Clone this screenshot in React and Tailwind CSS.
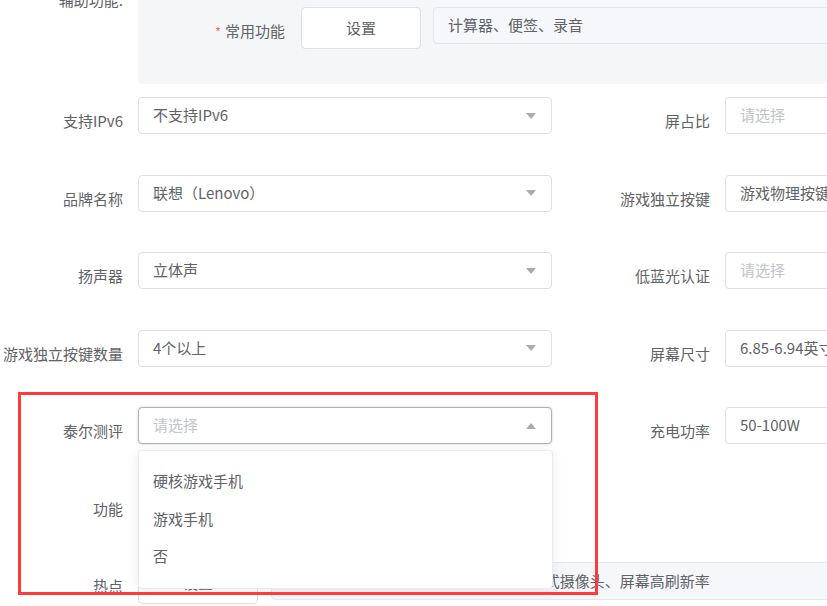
import React from 'react';

const FONT = { fontFamily: '"Noto Sans CJK SC", "Noto Sans", sans-serif' };

function Arrow({ up }) {
  return (
    <svg width="10" height="6" viewBox="0 0 10 6" className="flex-shrink-0">
      {up ? <polygon points="0,6 10,6 5,0" fill="#a8abb2" /> : <polygon points="0,0 10,0 5,6" fill="#a8abb2" />}
    </svg>
  );
}

function Select({ value, placeholder = '请选择', width = 'w-[414px]', open, arrow = true, children }) {
  return (
    <div className={`relative flex-shrink-0 ${width}`}>
      <div
        className={`h-[37px] rounded-[4px] border bg-white flex items-center justify-between pl-[14px] pr-[15px] ${
          open ? 'border-[#aab1bf] shadow-[0_0_3px_rgba(0,0,0,0.18)]' : 'border-[#dcdfe6]'
        }`}
      >
        <span className={`whitespace-nowrap ${value ? 'text-[#606266]' : 'text-[#c0c4cc]'}`}>{value || placeholder}</span>
        {arrow && <Arrow up={open} />}
      </div>
      {children}
    </div>
  );
}

function Label({ children }) {
  return (
    <div className="w-[138px] flex-shrink-0 pr-[15px] pt-[14px] leading-5 text-right whitespace-nowrap text-[#606266]">
      {children}
    </div>
  );
}

const ROWS = [
  { left: ['支持IPv6', '不支持IPv6'], right: ['屏占比', ''] },
  { left: ['品牌名称', '联想（Lenovo）'], right: ['游戏独立按键', '游戏物理按键'] },
  { left: ['扬声器', '立体声'], right: ['低蓝光认证', ''] },
  { left: ['游戏独立按键数量', '4个以上'], right: ['屏幕尺寸', '6.85-6.94英寸'] },
];

const OPTIONS = ['硬核游戏手机', '游戏手机', '否'];

export default function App() {
  return (
    <div className="relative w-[827px] h-[606px] overflow-hidden bg-white text-[15px]" style={FONT}>
      {/* 辅助功能 panel */}
      <div className="flex h-[84px]">
        <div className="w-[138px] flex-shrink-0 pr-[15px] text-right text-[#606266] leading-[22px] -mt-[11px]">辅助功能:</div>
        <div className="flex-1 bg-[#f5f6f8] rounded-b-[4px] flex items-start pt-[7px] overflow-hidden">
          <div className="w-[163px] flex-shrink-0 pr-[16px] pt-[13px] leading-[22px] text-right text-[#606266] whitespace-nowrap">
            <span className="text-[#f56c6c] mr-[4px] text-[13px]">*</span>常用功能
          </div>
          <div className="w-[120px] h-[42px] flex-shrink-0 bg-white border border-[#dcdfe6] rounded-[4px] flex items-center justify-center text-[#606266]">
            设置
          </div>
          <div className="ml-[12px] w-[420px] flex-shrink-0 h-[37px] bg-[#f5f7fa] border border-[#e4e7ed] rounded-[4px] flex items-center px-[14px] text-[#606266] whitespace-nowrap">
            计算器、便签、录音
          </div>
        </div>
      </div>

      {/* form rows */}
      <div className="mt-[13px] flex flex-col gap-[40.5px]">
        {ROWS.map((r) => (
          <div key={r.left[0]} className="flex h-[37px]">
            <div className="w-[587px] flex-shrink-0 flex">
              <Label>{r.left[0]}</Label>
              <Select value={r.left[1]} />
            </div>
            <div className="flex">
              <Label>{r.right[0]}</Label>
              <Select value={r.right[1]} width="w-[300px]" />
            </div>
          </div>
        ))}

        {/* 泰尔测评 with open dropdown */}
        <div className="flex h-[37px] relative z-10">
          <div className="w-[587px] flex-shrink-0 flex">
            <Label>泰尔测评</Label>
            <Select open>
              <div className="absolute left-0 top-[43px] w-[415px] bg-white border border-[#e9ebef] rounded-[4px] shadow-[0_2px_12px_rgba(0,0,0,0.08)] pt-[11px] pb-[13px]">
                {OPTIONS.map((o) => (
                  <div key={o} className="h-[37.5px] leading-[37.5px] px-[14px] text-[#606266]">
                    {o}
                  </div>
                ))}
              </div>
            </Select>
          </div>
          <div className="flex">
            <Label>充电功率</Label>
            <Select value="50-100W" width="w-[300px]" />
          </div>
        </div>

        {/* 功能 (button hidden under the dropdown) */}
        <div className="flex h-[37px]">
          <Label>功能</Label>
          <div className="w-[120px] h-[42px] flex-shrink-0 bg-white border border-[#dcdfe6] rounded-[4px]" />
        </div>

        {/* 热点 */}
        <div className="flex h-[37px]">
          <Label>热点</Label>
          <div className="w-[120px] h-[42px] flex-shrink-0 bg-white border border-[#dcdfe6] rounded-[4px] flex items-center justify-center text-[#606266]">
            设置
          </div>
          <div className="ml-[13px] w-[600px] flex-shrink-0 h-[38px] bg-[#f5f7fa] border border-[#e4e7ed] rounded-[4px] flex items-center px-[14px] text-[#606266] whitespace-nowrap">
            极速闪充、游戏模式、5G全网通、升降式摄像头、屏幕高刷新率
          </div>
        </div>
      </div>

      {/* red highlight box */}
      <div className="absolute left-[18px] top-[392px] w-[580px] h-[203px] border-[3px] border-[#ff3b3b] z-20 pointer-events-none" />
    </div>
  );
}
